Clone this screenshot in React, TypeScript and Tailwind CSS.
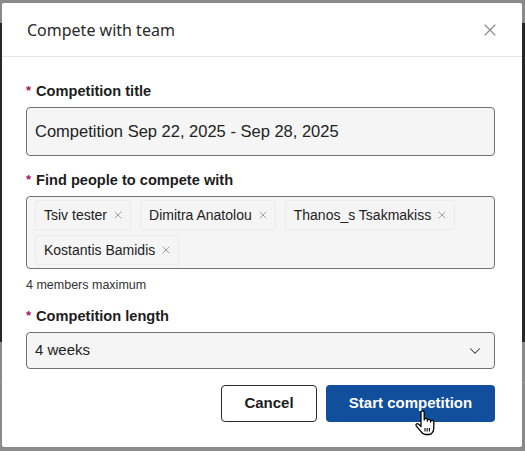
import { ChevronDown, X } from "lucide-react";

const members = ["Tsiv tester", "Dimitra Anatolou", "Thanos_s Tsakmakiss", "Kostantis Bamidis"];

function Label({ children }: { children: React.ReactNode }) {
  return (
    <div className="flex items-center gap-[5px] text-[14.6px] leading-5 font-bold text-[#1d1d1d]">
      <span className="text-[#a3195b] text-[13px]">*</span>
      <span>{children}</span>
    </div>
  );
}

function HandCursor() {
  return (
    <svg
      width="24"
      height="28"
      viewBox="0 0 24 28"
      className="absolute left-[414px] top-[409px] pointer-events-none"
    >
      <path
        d="M7 3.5a1.6 1.6 0 0 1 3.2 0V11a1.6 1.6 0 0 1 3.2 0v1a1.6 1.6 0 0 1 3.2 0v1a1.6 1.6 0 0 1 3.2 0v6c0 3.5-2.2 6.5-5 6.5h-3.5c-2 0-3.2-1-4.3-2.8L2.2 16.8c-.9-1.4.9-2.9 2.2-1.7L7 17.5Z"
        fill="#fff"
        stroke="#000"
        strokeWidth="1.3"
        strokeLinejoin="round"
      />
      <path d="M11 19v3.5M13.2 19v3.5M15.4 19v3.5" stroke="#000" strokeWidth="1.1" />
    </svg>
  );
}

export default function App() {
  return (
    <div
      className="relative w-[525px] h-[451px] overflow-hidden bg-[#8a8a8a]"
      style={{ fontFamily: '"Liberation Sans", Arial, sans-serif' }}
    >
      {/* page under the overlay */}
      <div className="flex flex-col h-full">
        <div className="h-[23px] bg-[#8a8a8a]" />
        <div className="h-[319px] bg-[#262626]" />
        <div className="h-[41px] bg-[#8a8a8a] border-b border-[#9a9a9a]" />
        <div className="flex-1 bg-[#8a8a8a]" />
      </div>

      {/* modal */}
      <div className="absolute left-[2px] top-[3px] w-[520px] h-[444px] bg-white rounded-[2px] flex flex-col">
        <div className="h-[54px] flex items-center justify-between pl-[25px] pr-[22px] pt-[1px] border-b border-[#e6e6e6]">
          <h2
            className="text-[16px] text-[#2a2a2a]"
            style={{ fontFamily: '"Noto Sans", sans-serif' }}
          >
            Compete with team
          </h2>
          <X size={20} strokeWidth={1.4} className="text-[#8c8c8c]" />
        </div>

        <div className="pl-[24px] pr-[27px] pt-[24px] flex flex-col">
          <Label>Competition title</Label>
          <div className="mt-[6px] h-[49px] rounded-[4px] border border-[#717171] bg-[#f5f5f5] flex items-center px-[8px] text-[16.5px] text-[#222]">
            Competition Sep 22, 2025 - Sep 28, 2025
          </div>

          <div className="mt-[14px]">
            <Label>Find people to compete with</Label>
          </div>
          <div className="mt-[6px] h-[73px] rounded-[4px] border border-[#717171] bg-[#f5f5f5] px-[8px] pt-[3px] flex flex-wrap content-start gap-x-[9px] gap-y-[5px]">
            {members.map((m) => (
              <div
                key={m}
                className="h-[30px] flex items-center gap-[5px] pl-[8px] pr-[6px] border border-[#ebebeb] rounded-[2px] bg-[#f5f5f5] text-[14px] text-[#222]"
              >
                <span>{m}</span>
                <X size={12} strokeWidth={1.6} className="text-[#8a8a8a]" />
              </div>
            ))}
          </div>
          <div className="mt-[8px] text-[12.5px] leading-4 text-[#333]">4 members maximum</div>

          <div className="mt-[13px]">
            <Label>Competition length</Label>
          </div>
          <div className="mt-[6px] h-[37px] rounded-[4px] border border-[#717171] bg-[#f5f5f5] flex items-center justify-between pl-[8px] pr-[10px] text-[15px] text-[#222]">
            <span>4 weeks</span>
            <ChevronDown size={18} strokeWidth={1.4} className="text-[#333]" />
          </div>

          <div className="mt-[16px] flex justify-end gap-[9px]">
            <button className="w-[96px] h-[37px] rounded-[4px] border border-[#2b2b2b] bg-white text-[15px] font-bold text-[#1d1d1d]">
              Cancel
            </button>
            <button className="w-[169px] h-[37px] rounded-[4px] bg-[#114e9c] text-[15px] font-bold text-white">
              Start competition
            </button>
          </div>
        </div>
      </div>

      <HandCursor />
    </div>
  );
}
